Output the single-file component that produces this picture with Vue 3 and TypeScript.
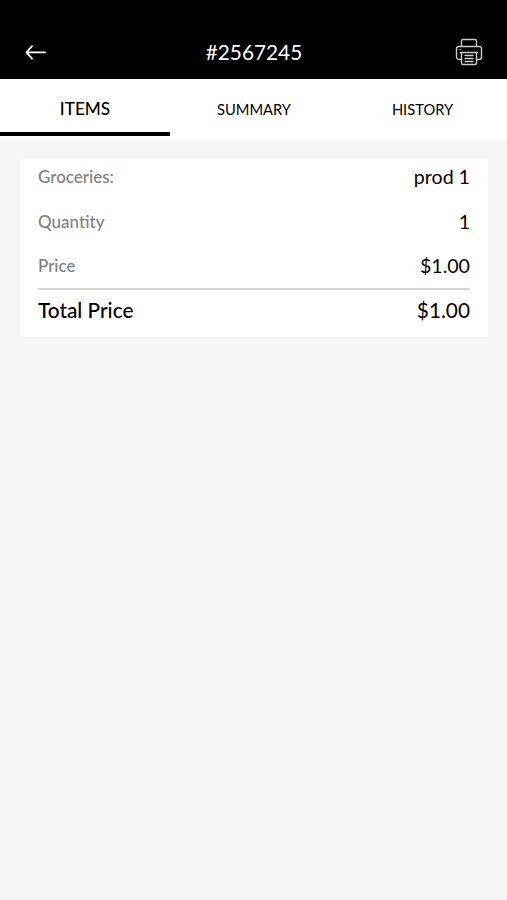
<script setup lang="ts">
import { ref } from 'vue'

interface Row { label: string; value: string }

const tabs: string[] = ['ITEMS', 'SUMMARY', 'HISTORY']
const active = ref(0)
const rows: Row[] = [
  { label: 'Groceries:', value: 'prod 1' },
  { label: 'Quantity', value: '1' },
  { label: 'Price', value: '$1.00' },
]
</script>

<template>
  <div class="screen">
    <header class="bar">
      <svg class="back" viewBox="0 0 22 16" width="22" height="16">
        <path d="M20 8.400H1.500M7 2.200L1.500 8.400L7 14.600" />
      </svg>
      <h1 class="title">#2567245</h1>
      <svg class="printer" viewBox="0 0 28 28" width="28" height="28">
        <path d="M6.500 8V3Q6.500 1.500 8 1.500H20Q21.500 1.500 21.500 3V8" />
        <path d="M6.500 21.500H4Q1.500 21.500 1.500 19V10.500Q1.500 8.500 4 8.500H24Q26.500 8.500 26.500 10.500V19Q26.500 21.500 24 21.500H21.500" />
        <path d="M5.500 14.500H22.500M6.500 14.500V25Q6.500 26.500 8 26.500H20Q21.500 26.500 21.500 25V14.500" />
        <path d="M10 17.500H18M10 20.500H18M10 23.500H18M5 11.500H5.100" />
      </svg>
    </header>
    <nav class="tabs">
      <button v-for="(t, i) in tabs" :key="t" class="tab" :class="{ active: active === i }" @click="active = i">{{ t }}</button>
    </nav>
    <main class="content">
      <section class="card">
        <div v-for="r in rows" :key="r.label" class="row">
          <span class="label">{{ r.label }}</span>
          <span class="value">{{ r.value }}</span>
        </div>
        <div class="row total">
          <span>Total Price</span>
          <span class="total-value">$1.00</span>
        </div>
      </section>
    </main>
  </div>
</template>

<style>
body { margin: 0; background: #f5f5f5; }
</style>

<style scoped>
.screen { box-sizing: border-box; min-height: 900px; background: #f5f5f5; font-family: Lato, "Liberation Sans", sans-serif; color: #000; }
.bar { box-sizing: border-box; height: 79px; padding: 25px 24px 0 25px; background: #000; color: #fff; display: grid; grid-template-columns: 28px 1fr 28px; align-items: center; }
.bar svg { fill: none; stroke-linecap: round; stroke-linejoin: round; }
.back { stroke: #fff; stroke-width: 1.800; }
.printer { stroke: #ccc; stroke-width: 1.400; }
.title { margin: 0; text-align: center; font-size: 20.800px; font-weight: 400; line-height: 26px; }
.tabs { height: 61px; display: grid; grid-template-columns: 170px 168px 169px; background: #fff; }
.tab { box-sizing: border-box; height: 57px; border: 0; border-bottom: 4px solid transparent; background: none; padding: 6px 0 0; font: 400 14.700px/20px Lato, "Liberation Sans", sans-serif; color: #000; }
.tab.active { padding-top: 7px; border-bottom-color: #000; font-size: 17.200px; font-weight: 500; }
.content { padding: 18px 19px 18px 20px; }
.card { box-sizing: border-box; height: 179px; padding: 0 18px; background: #fff; }
.row { box-sizing: border-box; display: flex; justify-content: space-between; align-items: center; height: 44.500px; }
.row:first-child { height: 41px; padding-bottom: 4px; }
.label { font-size: 17px; font-weight: 500; color: #808080; }
.value { font-size: 19.600px; }
.total { height: 45px; padding-bottom: 4px; border-top: 2px solid #d5d5d5; font-size: 20.800px; font-weight: 500; }
.total-value { font-size: 20.800px; font-weight: 400; }
</style>
